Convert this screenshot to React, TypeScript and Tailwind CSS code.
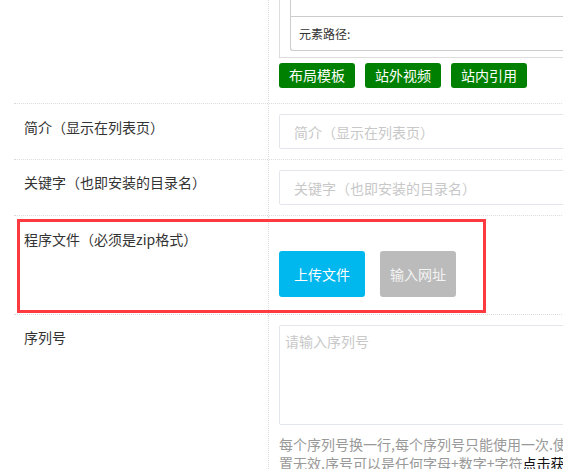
import React from 'react';

const Label: React.FC<{ text: string; pt: string }> = ({ text, pt }) => (
  <div className={`w-[255px] shrink-0 border-r border-dotted border-[#dcdcdc] pl-[10px] ${pt} text-[14px] leading-[20px] text-[#333]`}>
    {text}
  </div>
);

export default function App() {
  return (
    <div className="relative w-[563px] h-[469px] overflow-hidden bg-white font-['Noto_Sans_CJK_SC',sans-serif]">
      <div className="w-[900px] pl-[14px]">
        {/* editor row */}
        <div className="flex border-b border-dotted border-[#dcdcdc]">
          <div className="w-[255px] shrink-0 border-r border-dotted border-[#dcdcdc]" />
          <div className="flex-1 pl-[10px] pb-[15px]">
            <div className="border-x border-b border-[#dddddd] pl-[10px] pb-[6px]">
              <div className="border-l border-b border-[#cccccc] rounded-bl-[3px]">
                <div className="h-[17px] border-b border-[#cccccc]" />
                <div className="h-[33px] flex items-center pl-[8px] text-[12px] text-[#333]">元素路径:</div>
              </div>
            </div>
            <div className="flex gap-[10px] mt-[5px]">
              {['布局模板', '站外视频', '站内引用'].map((t) => (
                <button key={t} className="w-[76px] h-[25px] rounded-[3px] bg-[#008000] text-white text-[14px] leading-[25px]">
                  {t}
                </button>
              ))}
            </div>
          </div>
        </div>

        {/* intro */}
        <div className="flex border-b border-dotted border-[#dcdcdc]">
          <Label text="简介（显示在列表页）" pt="pt-[13px]" />
          <div className="flex-1 pl-[10px] py-[10px]">
            <input
              className="w-full h-[35px] border border-[#e3e6ea] rounded-[2px] pl-[14px] text-[14px] outline-none placeholder:text-[#c8c8c8]"
              placeholder="简介（显示在列表页）"
            />
          </div>
        </div>

        {/* keywords */}
        <div className="flex border-b border-dotted border-[#dcdcdc]">
          <Label text="关键字（也即安装的目录名）" pt="pt-[12px]" />
          <div className="flex-1 pl-[10px] py-[10px]">
            <input
              className="w-full h-[35px] border border-[#e3e6ea] rounded-[2px] pl-[14px] text-[14px] outline-none placeholder:text-[#c8c8c8]"
              placeholder="关键字（也即安装的目录名）"
            />
          </div>
        </div>

        {/* program file */}
        <div className="flex border-b border-dotted border-[#dcdcdc]">
          <Label text="程序文件（必须是zip格式）" pt="pt-[13px]" />
          <div className="flex-1 pl-[10px] pt-[35px] pb-[17px]">
            <div className="flex gap-[15px]">
              <button className="w-[86px] h-[46px] rounded-[3px] bg-[#00b7ee] text-white text-[14px]">上传文件</button>
              <button className="w-[76px] h-[46px] rounded-[3px] bg-[#bbbbbb] text-[#f4f4f4] text-[14px]">输入网址</button>
            </div>
          </div>
        </div>

        {/* serial */}
        <div className="flex">
          <Label text="序列号" pt="pt-[12px]" />
          <div className="flex-1 pl-[10px] pt-[10px]">
            <textarea
              className="block w-full h-[100px] border border-[#e3e6ea] rounded-[2px] px-[5px] pt-[5px] text-[14px] leading-[20px] outline-none resize-none placeholder:text-[#c8c8c8]"
              placeholder="请输入序列号"
            />
            <p className="mt-[10px] text-[14px] leading-[19px] text-[#999] whitespace-nowrap">
              每个序列号换一行,每个序列号只能使用一次.使用后设
              <br />
              置无效.序号可以是任何字母+数字+字符<a className="text-[#111]">点击获取</a>
            </p>
          </div>
        </div>
      </div>

      {/* annotation */}
      <div className="absolute left-[17px] top-[219px] w-[469px] h-[94px] border-[3px] border-[#fc3a3f]" />
    </div>
  );
}
